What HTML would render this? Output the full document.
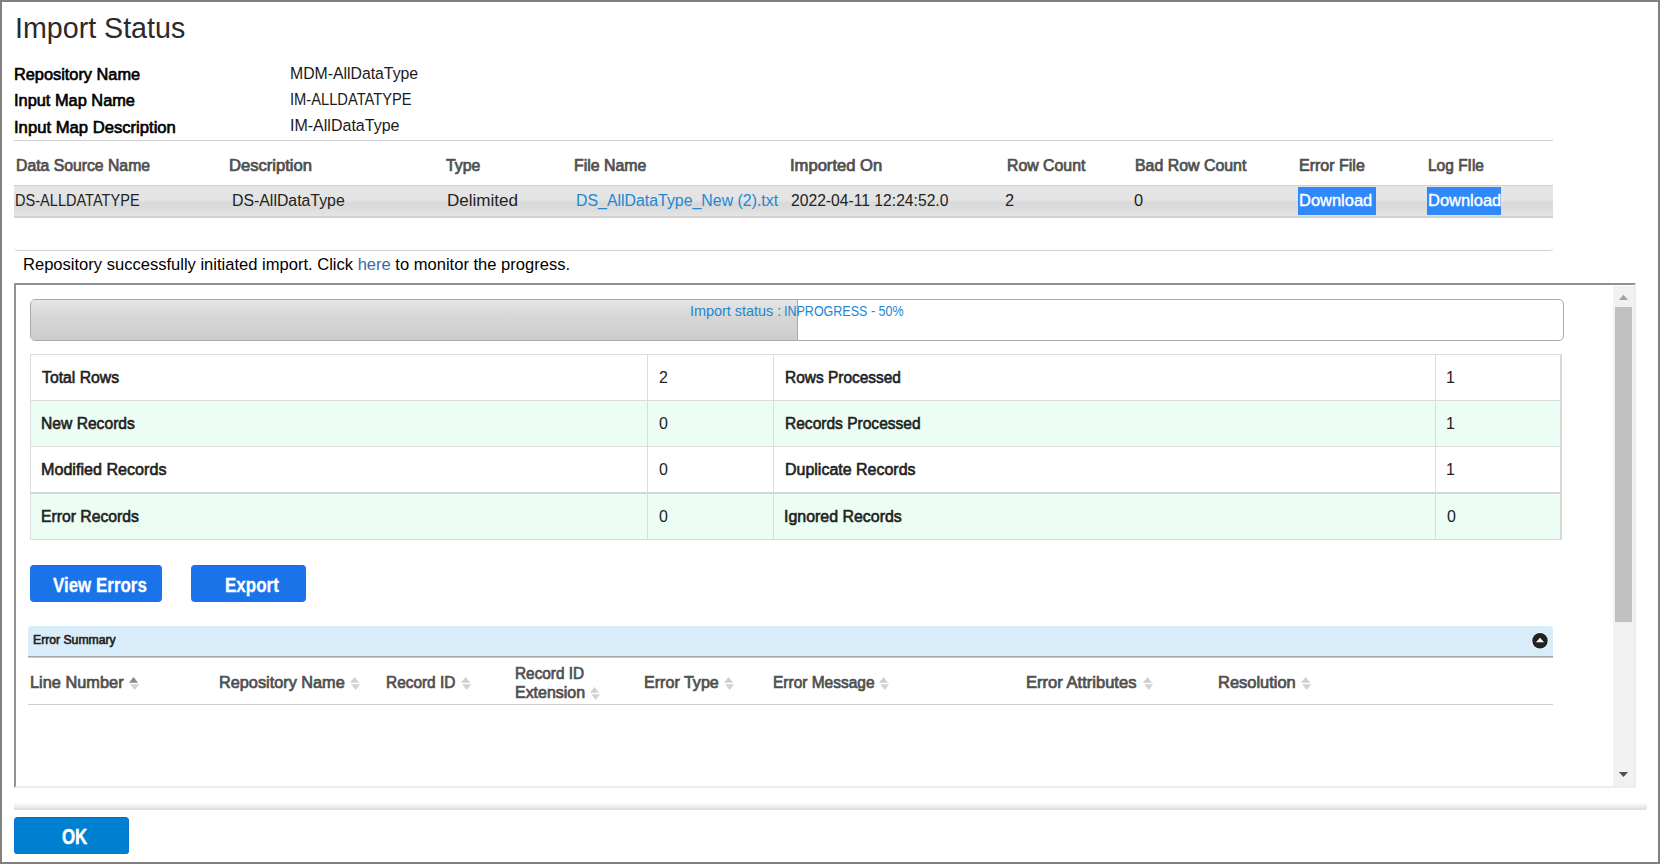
<!DOCTYPE html>
<html lang="en">
<head>
<meta charset="utf-8">
<title>Import Status</title>
<style>
*{box-sizing:border-box}
html,body{margin:0;padding:0}
body{width:1660px;height:864px;overflow:hidden;background:#fff;position:relative;font-family:"Liberation Sans",sans-serif;font-size:16px;color:#222}
.a{position:absolute}
.t{position:absolute;white-space:pre;line-height:1;transform-origin:0 0;margin:0;font-weight:400;text-decoration:none;font-style:normal}
.t a{text-decoration:none}
#frame{left:0;top:0;width:1660px;height:864px;border:2px solid #808080}
.hl{height:1px;background:#cfcfcf}
#row{left:14px;top:185px;width:1539px;height:33px;border-top:1px solid #d1d1d1;border-bottom:2px solid #d1d1d1;
 background:linear-gradient(to bottom,#e5e5e5 0,#e4e4e4 46%,#d9d9d9 56%,#dbdbdb 70%,#e4e4e4 100%)}
.dl{top:187px;height:28px;background:#3089fb}
#sep{left:14px;top:240px;width:1539px;height:11px;border-bottom:1px solid #d2d2d2;border-radius:0 0 4px 4px}
#box{left:14px;top:283px;width:1622px;height:505px;border:2px solid;border-color:#929292 #eee #eee #929292;background:#fff}
#track{left:1613px;top:286px;width:21px;height:500px;background:#f1f1f1}
#thumb{left:1615px;top:307px;width:17px;height:315px;background:#c1c1c1}
.tri{width:0;height:0;border-left:5px solid transparent;border-right:5px solid transparent}
#pbar{left:30px;top:299px;width:1534px;height:42px;border:1px solid #aaa;border-radius:5px;background:#fff;overflow:hidden}
#pval{left:0;top:0;width:767px;height:40px;border-right:1px solid #aaa;background:linear-gradient(to bottom,#e6e6e6 0,#d6d6d6 45%,#cccccc 100%)}
#stats{left:30px;top:354px;width:1532px;height:186px;border-collapse:separate;table-layout:fixed;border-spacing:0;border-top:1px solid #dcdcdc;border-left:1px solid #dcdcdc}
#stats td{border-right:1px solid #dcdcdc;border-bottom:1px solid #dcdcdc;padding:0;height:46px}
#stats td:last-child{border-right:2px solid #d8d8d8}
#stats tr:nth-child(3) td{height:47px;border-bottom:2px solid #d6d6d6}
#stats tr:nth-child(even) td{background:#ecfdf3}
button{border:0;padding:0;margin:0;font:inherit;color:inherit;display:block;overflow:visible;text-align:left}
.btn{top:565px;height:37px;border-radius:4px;background:#1a73e8;border-top:1px solid #176bdb}
#eshead{left:28px;top:626px;width:1525px;height:31px;background:#d9ecf9;border-radius:4px 4px 0 0;border-bottom:1px solid #a6a6a6;box-shadow:0 1px 0 #c8c8c8}
#shadow{left:14px;top:802px;width:1633px;height:8px;border-radius:0 0 2px 0;background:linear-gradient(to bottom,#fff 0,#f7f7f7 30%,#ececec 60%,#dddddd 90%,#e2e2e2 100%)}
#ok{left:14px;top:817px;width:115px;height:37px;border-radius:4px;background:#0080d0;border-top:1px solid #0071b8;box-shadow:inset 1px 0 0 #0b73d6,inset -1px 0 0 #0b73d6,inset 0 -1px 0 #0b73d6}
.sort{width:11px;height:14px}
</style>
</head>
<body>
<div id="frame" class="a"></div>
<div class="a hl" style="left:14px;top:140px;width:1539px"></div>
<div id="row" class="a"></div>
<div class="a dl" style="left:1298px;width:78px"><a class="t" style="left:0.92px;top:5.80px;font-size:16.9px;color:#fff;transform:scaleX(0.9743);-webkit-text-stroke:0.4px #fff">Download</a></div>
<div class="a dl" style="left:1427px;width:74px"><a class="t" style="left:0.72px;top:5.80px;font-size:16.9px;color:#fff;transform:scaleX(0.9743);-webkit-text-stroke:0.4px #fff">Download</a></div>
<div id="sep" class="a"></div>
<div id="box" class="a"></div>
<div id="track" class="a"></div>
<div id="thumb" class="a"></div>
<svg class="a" style="left:1613px;top:286px" width="21" height="21" viewBox="0 0 21 21"><path d="M5.9 13.9 L10.5 8.8 L15.1 13.9 Z" fill="#a3a3a3"/></svg>
<svg class="a" style="left:1613px;top:765px" width="21" height="21" viewBox="0 0 21 21"><path d="M5.9 6.9 L10.5 12 L15.1 6.9 Z" fill="#505050"/></svg>
<div id="pbar" class="a"><div id="pval" class="a"></div></div>
<table id="stats" class="a">
<colgroup><col style="width:617px"><col style="width:126px"><col style="width:662px"><col style="width:126px"></colgroup>
<tr><td></td><td></td><td></td><td></td></tr>
<tr><td></td><td></td><td></td><td></td></tr>
<tr><td></td><td></td><td></td><td></td></tr>
<tr><td></td><td></td><td></td><td></td></tr>
</table>
<button type="button" class="a btn" style="left:30px;width:132px"><span class="t" style="left:22.53px;top:9.50px;font-size:19.94px;color:#fff;transform:scaleX(0.8495);font-weight:700;-webkit-text-stroke:0.3px #fff">View Errors</span></button>
<button type="button" class="a btn" style="left:191px;width:115px"><span class="t" style="left:33.57px;top:9.50px;font-size:19.94px;color:#fff;transform:scaleX(0.8521);font-weight:700;-webkit-text-stroke:0.3px #fff">Export</span></button>
<div id="eshead" class="a"><span class="t" style="left:4.70px;top:8.00px;font-size:12.26px;color:#222;transform:scaleX(0.9954);-webkit-text-stroke:0.62px #222">Error Summary</span></div>
<svg class="a" style="left:1530px;top:631px" width="20" height="20" viewBox="0 0 20 20"><circle cx="10" cy="9.75" r="8.3" fill="none" stroke="#fff" stroke-opacity="0.35" stroke-width="1"/><circle cx="10" cy="9.75" r="7.7" fill="#222"/><path d="M5.9 11.3 L10 6.7 L14.1 11.3 Z" fill="#f2f9fe"/></svg>
<svg class="a sort" style="left:128.9px;top:676.8px" width="11" height="14" viewBox="0 0 11 14"><path d="M0 5.8 L4.55 0 L9.1 5.8 Z" fill="#8a8a8a"/><path d="M1.1 7.3 L5.65 13.1 L10.2 7.3 Z" fill="#d2d2d2"/></svg>
<svg class="a sort" style="left:350.1px;top:676.8px" width="11" height="14" viewBox="0 0 11 14"><path d="M0 5.8 L4.55 0 L9.1 5.8 Z" fill="#cfcfcf"/><path d="M1.1 7.3 L5.65 13.1 L10.2 7.3 Z" fill="#d2d2d2"/></svg>
<svg class="a sort" style="left:461.1px;top:676.8px" width="11" height="14" viewBox="0 0 11 14"><path d="M0 5.8 L4.55 0 L9.1 5.8 Z" fill="#cfcfcf"/><path d="M1.1 7.3 L5.65 13.1 L10.2 7.3 Z" fill="#d2d2d2"/></svg>
<svg class="a sort" style="left:590.2px;top:686.6px" width="11" height="14" viewBox="0 0 11 14"><path d="M0 5.8 L4.55 0 L9.1 5.8 Z" fill="#cfcfcf"/><path d="M1.1 7.3 L5.65 13.1 L10.2 7.3 Z" fill="#d2d2d2"/></svg>
<svg class="a sort" style="left:724px;top:676.8px" width="11" height="14" viewBox="0 0 11 14"><path d="M0 5.8 L4.55 0 L9.1 5.8 Z" fill="#cfcfcf"/><path d="M1.1 7.3 L5.65 13.1 L10.2 7.3 Z" fill="#d2d2d2"/></svg>
<svg class="a sort" style="left:879.2px;top:676.8px" width="11" height="14" viewBox="0 0 11 14"><path d="M0 5.8 L4.55 0 L9.1 5.8 Z" fill="#cfcfcf"/><path d="M1.1 7.3 L5.65 13.1 L10.2 7.3 Z" fill="#d2d2d2"/></svg>
<svg class="a sort" style="left:1143.2px;top:676.8px" width="11" height="14" viewBox="0 0 11 14"><path d="M0 5.8 L4.55 0 L9.1 5.8 Z" fill="#cfcfcf"/><path d="M1.1 7.3 L5.65 13.1 L10.2 7.3 Z" fill="#d2d2d2"/></svg>
<svg class="a sort" style="left:1301.2px;top:676.8px" width="11" height="14" viewBox="0 0 11 14"><path d="M0 5.8 L4.55 0 L9.1 5.8 Z" fill="#cfcfcf"/><path d="M1.1 7.3 L5.65 13.1 L10.2 7.3 Z" fill="#d2d2d2"/></svg>
<div class="a hl" style="left:28px;top:704px;width:1525px"></div>
<div id="shadow" class="a"></div>
<button type="button" id="ok" class="a"><span class="t" style="left:48.17px;top:8.60px;font-size:21.24px;color:#fff;transform:scaleX(0.7924);font-weight:700;-webkit-text-stroke:0.5px #fff">OK</span></button>
<h1 class="t" style="left:14.88px;top:13.90px;font-size:28.7px;color:#2a2a2a;transform:scaleX(0.9978)">Import Status</h1>
<b class="t" style="left:14.20px;top:66.70px;font-size:15.74px;color:#000;transform:scaleX(1.0376);-webkit-text-stroke:0.62px #000">Repository Name</b>
<b class="t" style="left:14.07px;top:92.90px;font-size:15.74px;color:#000;transform:scaleX(1.0399);-webkit-text-stroke:0.62px #000">Input Map Name</b>
<b class="t" style="left:14.04px;top:119.70px;font-size:15.74px;color:#000;transform:scaleX(1.0577);-webkit-text-stroke:0.62px #000">Input Map Description</b>
<span class="t" style="left:290.32px;top:66.00px;font-size:16.67px;color:#1a1a1a;transform:scaleX(0.9479)">MDM-AllDataType</span>
<span class="t" style="left:290.18px;top:91.70px;font-size:16.67px;color:#1a1a1a;transform:scaleX(0.8823)">IM-ALLDATATYPE</span>
<span class="t" style="left:290.06px;top:117.50px;font-size:16.67px;color:#1a1a1a;transform:scaleX(0.9615)">IM-AllDataType</span>
<span class="t" style="left:15.64px;top:157.90px;font-size:15.59px;color:#505050;transform:scaleX(1.0117);-webkit-text-stroke:0.72px #505050">Data Source Name</span>
<span class="t" style="left:229.38px;top:157.90px;font-size:15.59px;color:#505050;transform:scaleX(1.0654);-webkit-text-stroke:0.72px #505050">Description</span>
<span class="t" style="left:445.66px;top:157.90px;font-size:15.59px;color:#505050;transform:scaleX(1.0153);-webkit-text-stroke:0.72px #505050">Type</span>
<span class="t" style="left:573.94px;top:157.90px;font-size:15.59px;color:#505050;transform:scaleX(1.0197);-webkit-text-stroke:0.72px #505050">File Name</span>
<span class="t" style="left:790.25px;top:157.90px;font-size:15.59px;color:#505050;transform:scaleX(1.0642);-webkit-text-stroke:0.72px #505050">Imported On</span>
<span class="t" style="left:1006.64px;top:157.90px;font-size:15.59px;color:#505050;transform:scaleX(1.0170);-webkit-text-stroke:0.72px #505050">Row Count</span>
<span class="t" style="left:1134.93px;top:157.90px;font-size:15.59px;color:#505050;transform:scaleX(1.0206);-webkit-text-stroke:0.72px #505050">Bad Row Count</span>
<span class="t" style="left:1299.13px;top:157.90px;font-size:15.59px;color:#505050;transform:scaleX(1.0274);-webkit-text-stroke:0.72px #505050">Error File</span>
<span class="t" style="left:1428.36px;top:157.90px;font-size:15.59px;color:#505050;transform:scaleX(0.9940);-webkit-text-stroke:0.72px #505050">Log FIle</span>
<span class="t" style="left:14.54px;top:191.80px;font-size:17.25px;color:#222;transform:scaleX(0.8440)">DS-ALLDATATYPE</span>
<span class="t" style="left:231.84px;top:191.80px;font-size:17.25px;color:#222;transform:scaleX(0.9186)">DS-AllDataType</span>
<span class="t" style="left:446.54px;top:191.80px;font-size:17.25px;color:#222;transform:scaleX(0.9881)">Delimited</span>
<a class="t" style="left:575.83px;top:191.80px;font-size:17.25px;color:#2187d2;transform:scaleX(0.9206)">DS_AllDataType_New (2).txt</a>
<span class="t" style="left:790.72px;top:191.80px;font-size:17.25px;color:#222;transform:scaleX(0.9085)">2022-04-11 12:24:52.0</span>
<span class="t" style="left:1005.49px;top:191.80px;font-size:17.25px;color:#222;transform:scaleX(0.9500)">2</span>
<span class="t" style="left:1133.98px;top:191.80px;font-size:17.25px;color:#222;transform:scaleX(0.9500)">0</span>
<span class="t" style="left:22.63px;top:255.60px;font-size:16.23px;color:#000;transform:scaleX(1.0200)">Repository successfully initiated import. Click <a style="color:#3a68a8">here</a> to monitor the progress.</span>
<span class="t" style="left:690.23px;top:303.90px;font-size:14.2px;color:#2187d2;transform:scaleX(1.0158)">Import status : </span>
<span class="t" style="left:783.70px;top:303.90px;font-size:14.2px;color:#2187d2;transform:scaleX(0.8816)">INPROGRESS - 50%</span>
<b class="t" style="left:42.15px;top:368.90px;font-size:16.46px;color:#222;transform:scaleX(0.9594);-webkit-text-stroke:0.62px #222">Total Rows</b>
<b class="t" style="left:41.20px;top:414.90px;font-size:16.46px;color:#222;transform:scaleX(0.9513);-webkit-text-stroke:0.62px #222">New Records</b>
<b class="t" style="left:41.17px;top:460.80px;font-size:16.46px;color:#222;transform:scaleX(0.9809);-webkit-text-stroke:0.62px #222">Modified Records</b>
<b class="t" style="left:41.19px;top:507.80px;font-size:16.46px;color:#222;transform:scaleX(0.9576);-webkit-text-stroke:0.62px #222">Error Records</b>
<b class="t" style="left:784.61px;top:368.90px;font-size:16.46px;color:#222;transform:scaleX(0.9400);-webkit-text-stroke:0.62px #222">Rows Processed</b>
<b class="t" style="left:784.61px;top:414.90px;font-size:16.46px;color:#222;transform:scaleX(0.9455);-webkit-text-stroke:0.62px #222">Records Processed</b>
<b class="t" style="left:784.58px;top:460.80px;font-size:16.46px;color:#222;transform:scaleX(0.9720);-webkit-text-stroke:0.62px #222">Duplicate Records</b>
<b class="t" style="left:784.34px;top:507.80px;font-size:16.46px;color:#222;transform:scaleX(0.9693);-webkit-text-stroke:0.62px #222">Ignored Records</b>
<span class="t" style="left:658.70px;top:369.90px;font-size:16.81px;color:#222;transform:scaleX(0.9500)">2</span>
<span class="t" style="left:658.70px;top:415.90px;font-size:16.81px;color:#222;transform:scaleX(0.9500)">0</span>
<span class="t" style="left:658.70px;top:461.80px;font-size:16.81px;color:#222;transform:scaleX(0.9500)">0</span>
<span class="t" style="left:658.70px;top:508.80px;font-size:16.81px;color:#222;transform:scaleX(0.9500)">0</span>
<span class="t" style="left:1446.26px;top:369.90px;font-size:16.81px;color:#222;transform:scaleX(0.9500)">1</span>
<span class="t" style="left:1446.26px;top:415.90px;font-size:16.81px;color:#222;transform:scaleX(0.9500)">1</span>
<span class="t" style="left:1446.26px;top:461.80px;font-size:16.81px;color:#222;transform:scaleX(0.9500)">1</span>
<span class="t" style="left:1446.50px;top:508.80px;font-size:16.81px;color:#222;transform:scaleX(0.9500)">0</span>
<span class="t" style="left:29.86px;top:674.00px;font-size:16.32px;color:#505050;transform:scaleX(1.0021);-webkit-text-stroke:0.72px #505050">Line Number</span>
<span class="t" style="left:219.16px;top:674.00px;font-size:16.32px;color:#505050;transform:scaleX(0.9974);-webkit-text-stroke:0.72px #505050">Repository Name</span>
<span class="t" style="left:385.92px;top:674.00px;font-size:16.32px;color:#505050;transform:scaleX(0.9448);-webkit-text-stroke:0.72px #505050">Record ID</span>
<span class="t" style="left:643.67px;top:674.00px;font-size:16.32px;color:#505050;transform:scaleX(0.9860);-webkit-text-stroke:0.72px #505050">Error Type</span>
<span class="t" style="left:772.52px;top:674.00px;font-size:16.32px;color:#505050;transform:scaleX(0.9489);-webkit-text-stroke:0.72px #505050">Error Message</span>
<span class="t" style="left:1026.44px;top:674.00px;font-size:16.32px;color:#505050;transform:scaleX(1.0152);-webkit-text-stroke:0.72px #505050">Error Attributes</span>
<span class="t" style="left:1218.15px;top:674.00px;font-size:16.32px;color:#505050;transform:scaleX(1.0090);-webkit-text-stroke:0.72px #505050">Resolution</span>
<span class="t" style="left:514.82px;top:664.70px;font-size:16.32px;color:#505050;transform:scaleX(0.9420);-webkit-text-stroke:0.72px #505050">Record ID</span>
<span class="t" style="left:514.78px;top:683.80px;font-size:16.32px;color:#505050;transform:scaleX(0.9773);-webkit-text-stroke:0.72px #505050">Extension</span>
</body>
</html>
